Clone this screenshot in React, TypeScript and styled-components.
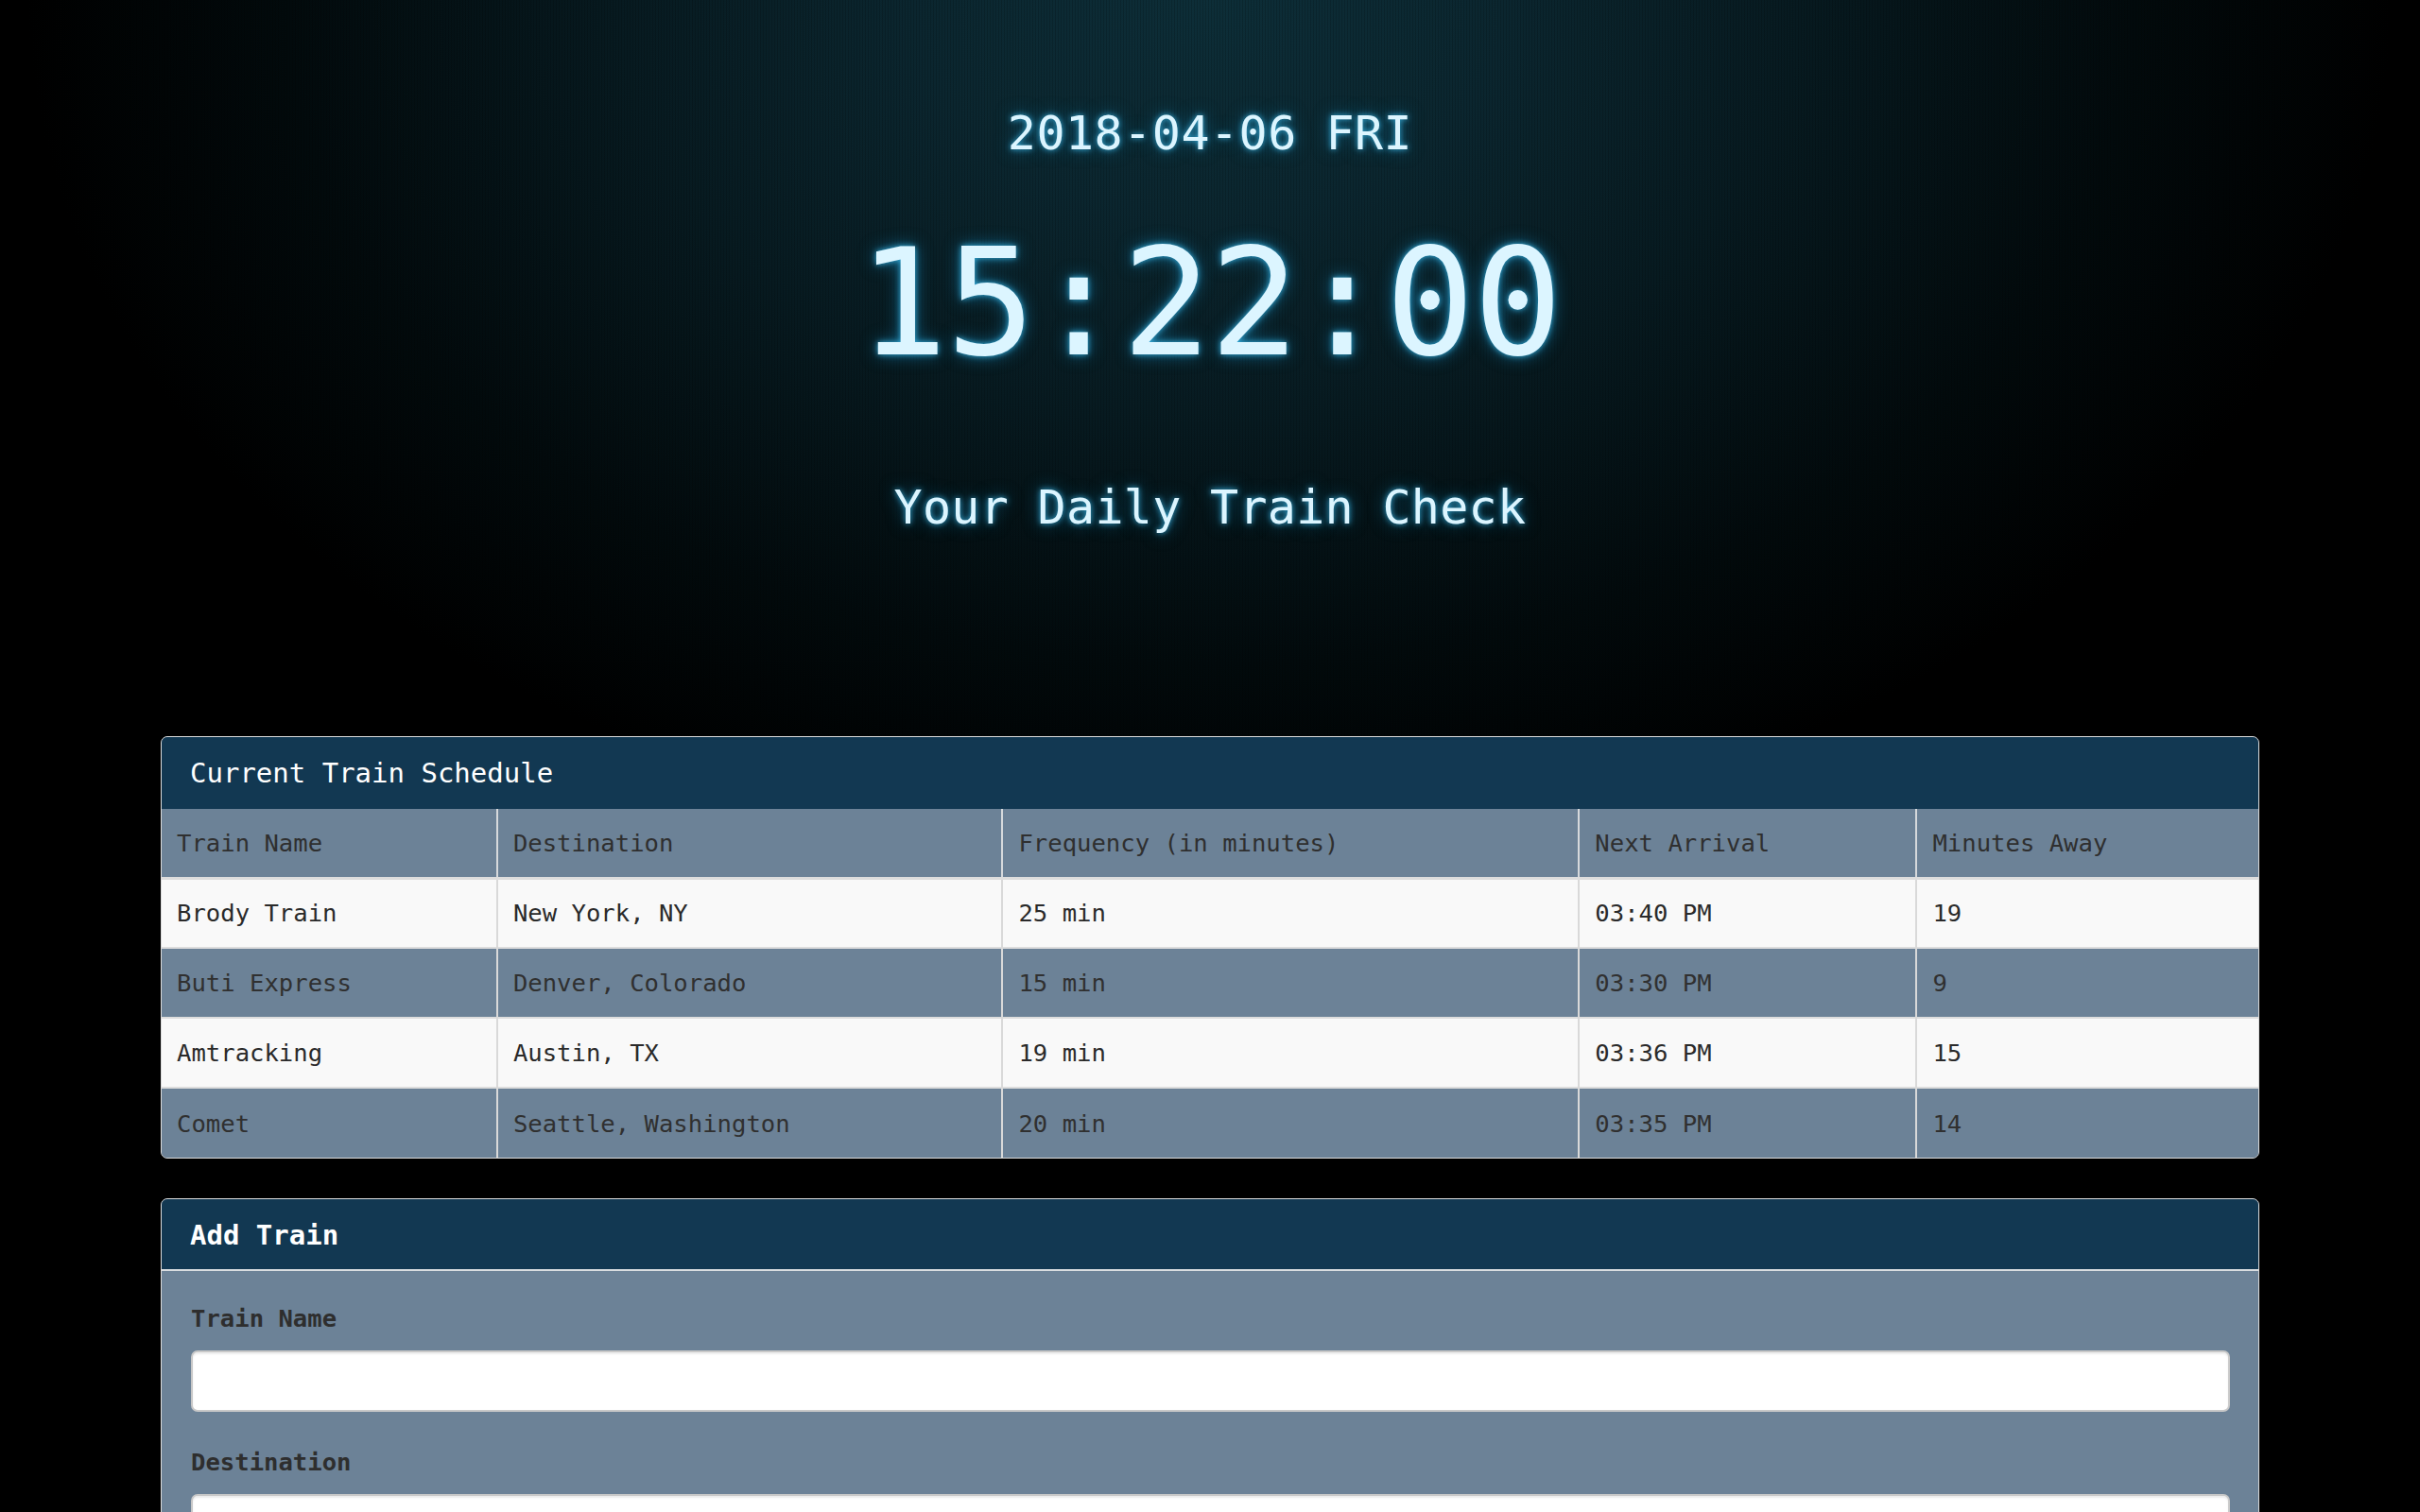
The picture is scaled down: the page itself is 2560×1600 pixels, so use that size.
import React from "react";
import styled, { createGlobalStyle } from "styled-components";

const GlobalStyle = createGlobalStyle`
  html, body {
    margin: 0;
    padding: 0;
    background: #000;
  }
  body {
    font-family: "DejaVu Sans Mono", "Liberation Mono", monospace;
    color: #333;
    min-height: 100vh;
  }
  * { box-sizing: border-box; }
`;

const Page = styled.div`
  min-height: 1600px;
  background:
    repeating-linear-gradient(90deg, rgba(0, 0, 0, 0.16) 0 1px, transparent 1px 3px),
    radial-gradient(ellipse 1250px 900px at 50% 0%, #0d2e38 0%, #0b262f 25%, #071a20 50%, #020a0c 78%, #000 100%);
  padding: 116px 170px 60px;
`;

const Hero = styled.header`
  display: flex;
  flex-direction: column;
  align-items: center;
  color: #dcf5ff;
  text-shadow: 0 0 6px rgba(60, 190, 240, 0.9), 0 0 18px rgba(20, 130, 180, 0.7);
`;

const DateLine = styled.div`
  font-size: 50px;
  line-height: 50px;
  letter-spacing: 0.5px;
`;

const Clock = styled.div`
  font-size: 156px;
  line-height: 156px;
  margin-top: 77px;
  letter-spacing: -1px;
`;

const Subtitle = styled.h1`
  margin: 113px 0 0;
  font-weight: normal;
  font-size: 50px;
  line-height: 51px;
  letter-spacing: 0.3px;
`;

const Panel = styled.section<{ $first?: boolean }>`
  margin-top: ${(p) => (p.$first ? "216px" : "42px")};
  border: 1px solid #dcdcdc;
  border-radius: 7px;
  overflow: hidden;
  background: #6c8297;
`;

const PanelHeading = styled.h3<{ $bold?: boolean; $divider?: boolean }>`
  margin: 0;
  background: #123852;
  color: #fff;
  font-size: 29px;
  line-height: 76px;
  height: 76px;
  font-weight: ${(p) => (p.$bold ? "bold" : "normal")};
  padding: 0 30px;
  border-bottom: ${(p) => (p.$divider ? "2px solid #d9dde0" : "none")};
`;

const Table = styled.table`
  width: 100%;
  border-collapse: collapse;
  table-layout: fixed;
  font-size: 25.6px;
`;

const Col = styled.col<{ $w: string }>`
  width: ${(p) => p.$w};
`;

const HeadCell = styled.th`
  text-align: left;
  font-weight: normal;
  color: #2f2f2f;
  background: #6c8297;
  height: 73px;
  padding: 0 16px;
  border-left: 2px solid #d6d9dc;
  border-bottom: 3px solid #dddddd;
  &:first-child { border-left: none; }
`;

const Row = styled.tr<{ $light: boolean }>`
  background: ${(p) => (p.$light ? "#f9f9f9" : "#6c8297")};
  color: ${(p) => (p.$light ? "#2a2a2a" : "#303030")};
`;

const Cell = styled.td`
  height: 74px;
  padding: 0 16px;
  border-left: 2px solid #d9d9d9;
  border-top: 2px solid #dddddd;
  white-space: nowrap;
  &:first-child { border-left: none; }
`;

const FormBody = styled.form`
  padding: 32px 30px 40px 31px;
  display: flex;
  flex-direction: column;
  gap: 35px;
`;

const Field = styled.div`
  display: flex;
  flex-direction: column;
  gap: 16px;
`;

const Label = styled.label`
  font-size: 25.6px;
  line-height: 36px;
  font-weight: bold;
  color: #2e2e2e;
`;

const Input = styled.input`
  height: 65px;
  width: 100%;
  border: 2px solid #c8c8c8;
  border-radius: 7px;
  background: #fff;
  box-shadow: inset 0 2px 2px rgba(0, 0, 0, 0.075);
  font-family: inherit;
  font-size: 25.6px;
  padding: 0 20px;
  color: #555;
`;

const trains = [
  { name: "Brody Train", dest: "New York, NY", freq: "25 min", next: "03:40 PM", away: "19" },
  { name: "Buti Express", dest: "Denver, Colorado", freq: "15 min", next: "03:30 PM", away: "9" },
  { name: "Amtracking", dest: "Austin, TX", freq: "19 min", next: "03:36 PM", away: "15" },
  { name: "Comet", dest: "Seattle, Washington", freq: "20 min", next: "03:35 PM", away: "14" },
];

export default function App() {
  return (
    <>
      <GlobalStyle />
      <Page>
        <Hero>
          <DateLine>2018-04-06 FRI</DateLine>
          <Clock>15:22:00</Clock>
          <Subtitle>Your Daily Train Check</Subtitle>
        </Hero>

        <Panel $first>
          <PanelHeading>Current Train Schedule</PanelHeading>
          <Table>
            <colgroup>
              <Col $w="16%" />
              <Col $w="24.1%" />
              <Col $w="27.5%" />
              <Col $w="16.1%" />
              <Col $w="16.3%" />
            </colgroup>
            <thead>
              <tr>
                <HeadCell>Train Name</HeadCell>
                <HeadCell>Destination</HeadCell>
                <HeadCell>Frequency (in minutes)</HeadCell>
                <HeadCell>Next Arrival</HeadCell>
                <HeadCell>Minutes Away</HeadCell>
              </tr>
            </thead>
            <tbody>
              {trains.map((t, i) => (
                <Row key={t.name} $light={i % 2 === 0}>
                  <Cell>{t.name}</Cell>
                  <Cell>{t.dest}</Cell>
                  <Cell>{t.freq}</Cell>
                  <Cell>{t.next}</Cell>
                  <Cell>{t.away}</Cell>
                </Row>
              ))}
            </tbody>
          </Table>
        </Panel>

        <Panel>
          <PanelHeading $bold $divider>Add Train</PanelHeading>
          <FormBody onSubmit={(e) => e.preventDefault()}>
            <Field>
              <Label htmlFor="train-name">Train Name</Label>
              <Input id="train-name" type="text" />
            </Field>
            <Field>
              <Label htmlFor="destination">Destination</Label>
              <Input id="destination" type="text" />
            </Field>
          </FormBody>
        </Panel>
      </Page>
    </>
  );
}
